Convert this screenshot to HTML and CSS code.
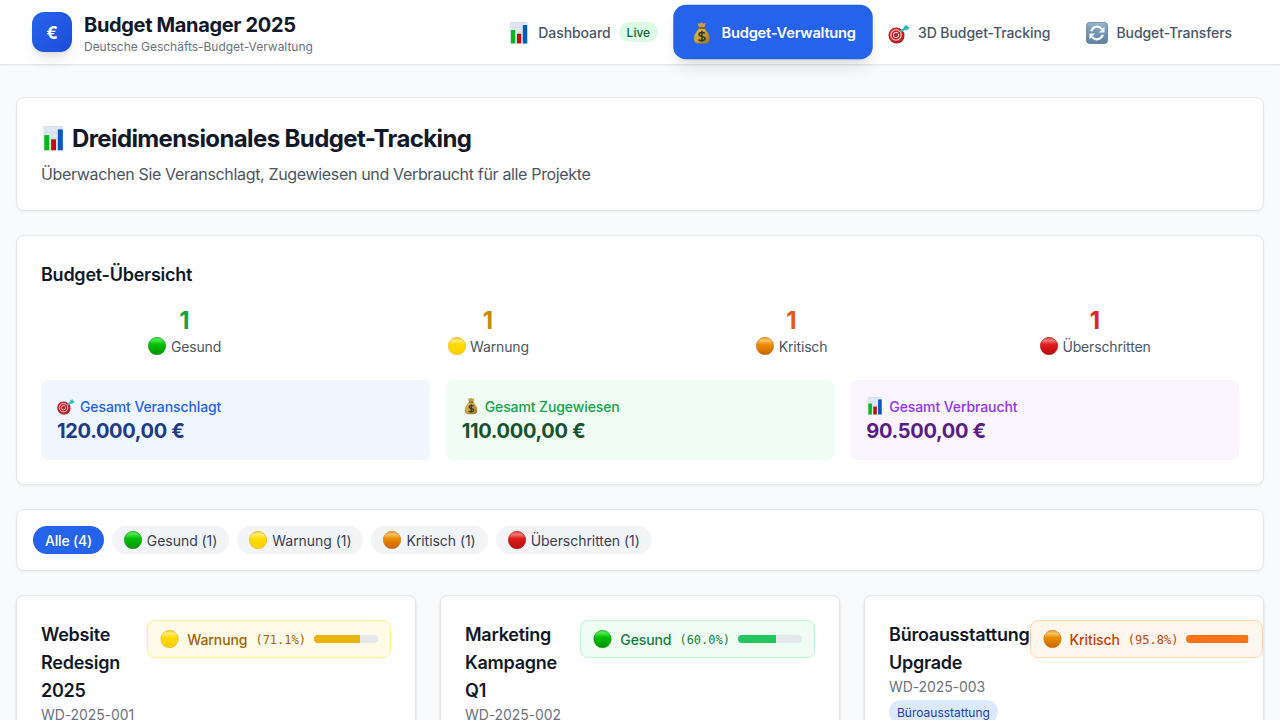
FILE: index.html
```html
<!DOCTYPE html>
<html lang="de">
<head>
<meta charset="utf-8">
<title>Budget Manager 2025</title>
<link rel="stylesheet" href="styles.css">
</head>
<body>
<svg class="defs" width="0" height="0" aria-hidden="true">
  <defs>
    <linearGradient id="gGreen" x2="0" y2="1"><stop offset="0" stop-color="#35e335"/><stop offset=".15" stop-color="#4be84b"/><stop offset=".42" stop-color="#00bd05"/><stop offset="1" stop-color="#009400"/></linearGradient>
    <linearGradient id="gYellow" x2="0" y2="1"><stop offset="0" stop-color="#f5c526"/><stop offset=".17" stop-color="#ffec78"/><stop offset=".42" stop-color="#ffdb00"/><stop offset="1" stop-color="#ffcf00"/></linearGradient>
    <linearGradient id="gOrange" x2="0" y2="1"><stop offset="0" stop-color="#e6951b"/><stop offset=".17" stop-color="#f9c56c"/><stop offset=".42" stop-color="#ec8c00"/><stop offset="1" stop-color="#c96200"/></linearGradient>
    <linearGradient id="gRed" x2="0" y2="1"><stop offset="0" stop-color="#d83030"/><stop offset=".17" stop-color="#f47c7c"/><stop offset=".42" stop-color="#e0191b"/><stop offset="1" stop-color="#b30f10"/></linearGradient>
    <linearGradient id="gSync" x2="0" y2="1"><stop offset="0" stop-color="#9fbbd2"/><stop offset=".25" stop-color="#7f9fba"/><stop offset="1" stop-color="#5f83a3"/></linearGradient>
    <linearGradient id="gBag" x2="1" y2="1"><stop offset="0" stop-color="#dfbd58"/><stop offset=".5" stop-color="#c9a13c"/><stop offset="1" stop-color="#9b7422"/></linearGradient>
  </defs>
  <symbol id="green" viewBox="0 0 18 18"><circle cx="9" cy="9" r="8.7" fill="url(#gGreen)" stroke="#079a0b" stroke-width=".6"/></symbol>
  <symbol id="yellow" viewBox="0 0 18 18"><circle cx="9" cy="9" r="8.7" fill="url(#gYellow)" stroke="#e5b01c" stroke-width=".6"/></symbol>
  <symbol id="orange" viewBox="0 0 18 18"><circle cx="9" cy="9" r="8.7" fill="url(#gOrange)" stroke="#c87314" stroke-width=".6"/></symbol>
  <symbol id="red" viewBox="0 0 18 18"><circle cx="9" cy="9" r="8.7" fill="url(#gRed)" stroke="#b81719" stroke-width=".6"/></symbol>
  <symbol id="chart" viewBox="0 0 22 22">
    <path fill="#dfe8f0" d="M2 0h17.5v21.5H2z"/><path fill="none" stroke="#c6d2dc" stroke-width=".5" d="M2 .3h17.3M2 5.5h17M2 10.5h17M2 16h17"/>
    <path fill="#05b915" d="M2.9 8h4.3v13.4H2.9z"/><path fill="#c00d12" d="M8.9 11.7h4.3v9.7H8.9z"/><path fill="#0758bd" d="M14.8 3h4.4v18.4h-4.4z"/>
  </symbol>
  <symbol id="bag" viewBox="0 0 22 22">
    <path fill="#c6a047" d="M7 1.5 9 2.2 11 .8l2 1.4 2.2-.7-1.6 4.2H8.6z"/>
    <path fill="url(#gBag)" stroke="#a5802d" stroke-width=".5" d="M8.5 6.5h5.2c1.5 2.2 4.7 5.2 4.7 9.6 0 3.7-1.7 4.7-4.4 4.7H8.2c-2.8 0-4.4-1-4.4-4.7 0-4.4 3.4-7.4 4.7-9.6z"/>
    <path stroke="#7b5325" stroke-width="1.4" d="M8.2 6.2h5.8"/>
    <path fill="none" stroke="#38321f" stroke-width="1.45" d="M14.1 11.3c-.8-1.1-5.5-1.5-5.5 1 0 2.7 5.6 1.3 5.6 4 0 2.6-5 2.3-6 .8M11.3 8.8v10.5"/>
  </symbol>
  <symbol id="target" viewBox="0 0 22 22">
    <circle cx="8.6" cy="13.6" r="7.9" fill="#a91a20"/><circle cx="7.9" cy="13" r="7.4" fill="#d42128"/>
    <circle cx="8" cy="13" r="5.2" fill="none" stroke="#f4dfdc" stroke-width="1.1"/><circle cx="8" cy="13" r="2.7" fill="none" stroke="#f4dfdc" stroke-width="1"/>
    <path stroke="#66494a" stroke-width="1" d="m8 13 5.6-4.1"/><path stroke="#37b4bd" stroke-width="2.2" d="m12.4 9.8 5-3.6"/>
    <path fill="#45bfc6" d="m15.4 7.2.6-3 3-1.4.4 2 2.6.5-1.9 2.4-3.4.9z"/><path stroke="#24878f" stroke-width=".6" d="m16 7 4-2.6"/>
  </symbol>
  <symbol id="sync" viewBox="0 0 22 22">
    <rect x=".4" y=".4" width="21.2" height="21.2" rx="3.6" fill="url(#gSync)" stroke="#587896" stroke-width=".8"/>
    <path fill="none" stroke="#fff" stroke-width="2.2" d="M5.2 9.2C6.8 4 13 3.3 15.9 7.1M16.8 12.8C15.2 18 9 18.7 6.1 14.9"/>
    <path fill="#fff" d="M18.5 4.7v5.7h-5.6zM3.5 17.3v-5.7h5.6z"/>
  </symbol>
</svg>

<header class="topbar">
  <div class="brand">
    <div class="logo">€</div>
    <div class="brand-text">
      <div class="brand-name">Budget Manager 2025</div>
      <div class="brand-sub">Deutsche Geschäfts-Budget-Verwaltung</div>
    </div>
  </div>
  <nav class="nav">
    <a class="nav-item"><svg class="icon-nav"><use href="#chart"/></svg><span class="nav-text">Dashboard</span><span class="live">Live</span></a>
    <a class="nav-item active"><svg class="icon-nav"><use href="#bag"/></svg><span class="nav-text">Budget-Verwaltung</span></a>
    <a class="nav-item"><svg class="icon-nav"><use href="#target"/></svg><span class="nav-text">3D Budget-Tracking</span></a>
    <a class="nav-item"><svg class="icon-nav"><use href="#sync"/></svg><span class="nav-text">Budget-Transfers</span></a>
  </nav>
</header>

<main class="page">
  <section class="card">
    <h1 class="page-title"><svg class="icon-title"><use href="#chart"/></svg>Dreidimensionales Budget-Tracking</h1>
    <p class="page-text">Überwachen Sie Veranschlagt, Zugewiesen und Verbraucht für alle Projekte</p>
  </section>

  <section class="card">
    <h2 class="section-title">Budget-Übersicht</h2>
    <div class="counts">
      <div class="count"><div class="number green">1</div><div class="label"><svg class="dot"><use href="#green"/></svg>Gesund</div></div>
      <div class="count"><div class="number yellow">1</div><div class="label"><svg class="dot"><use href="#yellow"/></svg>Warnung</div></div>
      <div class="count"><div class="number orange">1</div><div class="label"><svg class="dot"><use href="#orange"/></svg>Kritisch</div></div>
      <div class="count"><div class="number red">1</div><div class="label"><svg class="dot"><use href="#red"/></svg>Überschritten</div></div>
    </div>
    <div class="totals">
      <div class="total total-blue"><div class="total-label"><svg class="dot"><use href="#target"/></svg>Gesamt Veranschlagt</div><div class="total-value">120.000,00 €</div></div>
      <div class="total total-green"><div class="total-label"><svg class="dot"><use href="#bag"/></svg>Gesamt Zugewiesen</div><div class="total-value">110.000,00 €</div></div>
      <div class="total total-purple"><div class="total-label"><svg class="dot"><use href="#chart"/></svg>Gesamt Verbraucht</div><div class="total-value">90.500,00 €</div></div>
    </div>
  </section>

  <section class="card filters">
    <button class="filter selected">Alle (4)</button>
    <button class="filter"><svg class="dot"><use href="#green"/></svg>Gesund (1)</button>
    <button class="filter"><svg class="dot"><use href="#yellow"/></svg>Warnung (1)</button>
    <button class="filter"><svg class="dot"><use href="#orange"/></svg>Kritisch (1)</button>
    <button class="filter"><svg class="dot"><use href="#red"/></svg>Überschritten (1)</button>
  </section>

  <section class="projects">
    <article class="card project">
      <div class="project-info"><h3 class="project-name">Website Redesign 2025</h3><div class="code">WD-2025-001</div></div>
      <div class="status status-yellow"><svg class="dot"><use href="#yellow"/></svg><span class="status-name">Warnung</span><span class="percent">(71.1%)</span><div class="bar"><div class="fill" style="width:71.1%"></div></div></div>
    </article>
    <article class="card project">
      <div class="project-info"><h3 class="project-name">Marketing Kampagne Q1</h3><div class="code">WD-2025-002</div></div>
      <div class="status status-green"><svg class="dot"><use href="#green"/></svg><span class="status-name">Gesund</span><span class="percent">(60.0%)</span><div class="bar"><div class="fill" style="width:60%"></div></div></div>
    </article>
    <article class="card project">
      <div class="project-info"><h3 class="project-name">Büroausstattung Upgrade</h3><div class="code">WD-2025-003</div><span class="tag">Büroausstattung</span></div>
      <div class="status status-orange"><svg class="dot"><use href="#orange"/></svg><span class="status-name">Kritisch</span><span class="percent">(95.8%)</span><div class="bar"><div class="fill" style="width:95.8%"></div></div></div>
    </article>
  </section>
</main>
</body>
</html>
```
FILE: styles.css
```css
* { box-sizing: border-box; margin: 0; padding: 0; }
html, body { height: 720px; overflow: hidden; }
body { background: #f9fafb; color: #111827; font: 16px/24px Inter, sans-serif; }
svg { display: block; flex: none; }
.defs { position: absolute; }

.topbar { height: 65px; padding: 0 32px; display: flex; justify-content: space-between; align-items: center; background: #fff; border-bottom: 1px solid #e5e7eb; box-shadow: 0 1px 2px rgba(0,0,0,.05); }
.brand { display: flex; align-items: center; gap: 12px; }
.brand-text { padding-top: 2px; }
.logo { width: 40px; height: 40px; padding-top: 1px; border-radius: 12px; display: flex; align-items: center; justify-content: center; color: #fff; font-size: 17px; font-weight: 700; background: linear-gradient(135deg, #2563eb, #1d4ed8); box-shadow: 0 10px 15px -3px rgba(0,0,0,.1), 0 4px 6px -4px rgba(0,0,0,.1); }
.brand-name { font-size: 20px; line-height: 28px; font-weight: 700; letter-spacing: -.34px; }
.brand-sub { font-size: 12px; line-height: 16px; color: #6b7280; letter-spacing: -.02px; }
.nav { display: flex; align-items: center; gap: 4px; }
.nav-item { display: flex; align-items: center; gap: 8px; height: 52px; padding: 0 16px; border-radius: 12px; font-size: 14px; font-weight: 500; letter-spacing: -.08px; color: #4b5563; white-space: nowrap; }
.nav-text { padding-top: 2px; }
.nav-item.active { color: #fff; font-weight: 600; letter-spacing: -.24px; background: #2563eb; transform: scale(1.05); box-shadow: 0 10px 15px -3px rgba(0,0,0,.1), 0 4px 6px -4px rgba(0,0,0,.1); }
.icon-nav { width: 22px; height: 22px; margin-top: 1px; }
.live { padding: 3px 8px 1px; border-radius: 10px; font-size: 12px; line-height: 16px; letter-spacing: 0; color: #166534; background: #dcfce7; }

.page { padding: 32px 16px; display: flex; flex-direction: column; gap: 24px; }
.card { padding: 24px; background: #fff; border: 1px solid #e5e7eb; border-radius: 8px; box-shadow: 0 1px 2px rgba(0,0,0,.05); }
.page-title { display: flex; align-items: center; gap: 6px; padding-top: 1px; margin-bottom: 7px; font-size: 24px; line-height: 32px; font-weight: 700; letter-spacing: -.61px; }
.icon-title { width: 25px; height: 25px; margin-top: -2px; }
.page-text { color: #4b5563; letter-spacing: -.335px; }
.section-title { padding-top: 1px; margin-bottom: 15px; font-size: 18px; line-height: 28px; font-weight: 600; letter-spacing: -.25px; }

.counts { display: grid; grid-template-columns: repeat(4, 1fr); gap: 16px; margin-bottom: 24px; }
.number { padding-top: 1px; padding-right: 1px; margin-bottom: -1px; text-align: center; font-size: 24px; line-height: 32px; font-weight: 700; letter-spacing: -.5px; }
.label { display: flex; justify-content: center; align-items: center; gap: 4.5px; padding-top: 1px; margin-bottom: -1px; font-size: 14px; line-height: 20px; letter-spacing: -.15px; color: #4b5563; }
.dot { width: 18px; height: 18px; }
.label .dot, .total-label .dot, .filter .dot { margin-top: -2px; }
.green { color: #16a34a; }
.yellow { color: #ca8a04; }
.orange { color: #ea580c; }
.red { color: #dc2626; }

.totals { display: grid; grid-template-columns: repeat(3, 1fr); gap: 16px; }
.total { padding: 17px 16px 15px; border-radius: 8px; }
.total-label { display: flex; align-items: center; gap: 5px; font-size: 14px; line-height: 20px; font-weight: 500; letter-spacing: -.1px; }
.total-value { font-size: 20px; line-height: 28px; font-weight: 700; letter-spacing: -.33px; }
.total-blue { background: #eff6ff; color: #2563eb; }
.total-blue .total-value { color: #1e3a8a; }
.total-green { background: #f0fdf4; color: #16a34a; }
.total-green .total-value { color: #14532d; }
.total-purple { background: #faf5ff; color: #9333ea; }
.total-purple .total-value { color: #581c87; }

.filters { display: flex; gap: 8px; padding: 16px; }
.filter { display: flex; align-items: center; gap: 5px; height: 28px; padding: 5px 12px 3px; border: 0; border-radius: 14px; background: #f3f4f6; color: #374151; font: 14px/20px Inter, sans-serif; letter-spacing: -.05px; }
.filter.selected { background: #2563eb; color: #fff; font-weight: 500; letter-spacing: -.2px; }

.projects { display: grid; grid-template-columns: repeat(3, minmax(0, 1fr)); gap: 24px; }
.project { display: flex; justify-content: space-between; align-items: flex-start; height: 300px; box-shadow: 0 1px 3px rgba(0,0,0,.1), 0 1px 2px -1px rgba(0,0,0,.1); }
.project-info { padding-top: 1px; }
.project-name { font-size: 18px; line-height: 28px; font-weight: 600; letter-spacing: -.24px; }
.code { font-size: 14px; line-height: 20px; letter-spacing: -.1px; color: #6b7280; white-space: nowrap; }
.tag { display: block; width: fit-content; margin-top: 3px; padding: 5px 8px 3px; border-radius: 12px; font-size: 12px; line-height: 16px; color: #1e40af; background: #dbeafe; }
.status { flex: none; display: flex; align-items: center; gap: 8px; height: 38px; padding: 0 12px; border: 1px solid; border-radius: 8px; font-size: 14px; font-weight: 500; letter-spacing: -.1px; }
.status-name { padding-top: 2px; }
.status .dot { width: 19px; }
.percent { padding-top: 1px; font: 12px/16px "DejaVu Sans Mono", monospace; letter-spacing: 0; }
.bar { width: 64px; height: 8px; border-radius: 4px; overflow: hidden; background: #e5e7eb; }
.fill { height: 100%; }
.status-yellow { background: #fefce8; border-color: #fef08a; color: #a16207; }
.status-yellow .fill { background: #eab308; }
.status-green { background: #f0fdf4; border-color: #bbf7d0; color: #15803d; }
.status-green .fill { background: #22c55e; }
.status-orange { background: #fff7ed; border-color: #fed7aa; color: #c2410c; }
.status-orange .fill { background: #f97316; }
```
